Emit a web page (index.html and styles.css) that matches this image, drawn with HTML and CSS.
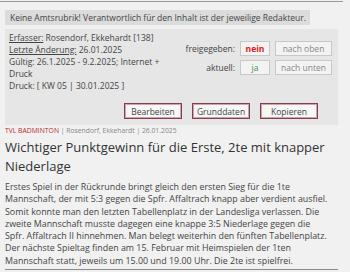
FILE: index.html
```html
<!DOCTYPE html>
<html lang="de">
<head>
    <meta charset="UTF-8">
    <title>Artikel</title>
    <link rel="stylesheet" href="styles.css">
</head>
<body>
    <div class="top-rule"></div>

    <div class="notice">Keine Amtsrubrik! Verantwortlich für den Inhalt ist der jeweilige Redakteur.</div>

    <div class="info-box">
        <div class="info-main">
            <div class="info-left">
                <div><u>Erfasser:</u> Rosendorf, Ekkehardt [138]</div>
                <div><u>Letzte Änderung:</u> 26.01.2025</div>
                <div>Gültig: 26.1.2025 - 9.2.2025; Internet + Druck</div>
                <div>Druck: [ KW 05 | 30.01.2025 ]</div>
            </div>
            <div class="info-right">
                <span class="status-label">freigegeben:</span>
                <span class="status nein">nein</span>
                <span class="move">nach oben</span>
                <span class="status-label">aktuell:</span>
                <span class="status ja">ja</span>
                <span class="move">nach unten</span>
            </div>
        </div>
        <div class="actions">
            <button>Bearbeiten</button>
            <button>Grunddaten</button>
            <button>Kopieren</button>
        </div>
    </div>

    <div class="meta"><span class="rubrik">TVL BADMINTON</span> | Rosendorf, Ekkehardt | 26.01.2025</div>

    <h1>Wichtiger Punktgewinn für die Erste, 2te mit knapper Niederlage</h1>

    <p class="text">Erstes Spiel in der Rückrunde bringt gleich den ersten Sieg für die 1te<br>
        Mannschaft, der mit 5:3 gegen die Spfr. Affaltrach knapp aber verdient ausfiel.<br>
        Somit konnte man den letzten Tabellenplatz in der Landesliga verlassen. Die<br>
        zweite Mannschaft musste dagegen eine knappe 3:5 Niederlage gegen die<br>
        Spfr. Affaltrach II hinnehmen. Man belegt weiterhin den fünften Tabellenplatz.<br>
        Der nächste Spieltag finden am 15. Februar mit Heimspielen der 1ten<br>
        Mannschaft statt, jeweils um 15.00 und 19.00 Uhr. Die 2te ist spielfrei.</p>

    <div class="bottom-rule"></div>
</body>
</html>
```

FILE: styles.css
```css
/* Grundlayout */
* {
    margin: 0;
    padding: 0;
    box-sizing: border-box;
}

body {
    font-family: "Open Sans", Arial, sans-serif;
    background-color: #f1f1f1;
    color: #444;
    padding: 0 12px 0 5px;
    width: 350px;
}

.top-rule {
    height: 1px;
    background-color: #9a9a9a;
    margin: 1px -5px 8px -5px;
}

/* Hinweis oben */
.notice {
    width: fit-content;
    background-color: #dcdcdc;
    font-size: 8.5px;
    line-height: 15px;
    padding: 0 4px 0 5px;
    color: #444;
}

/* Infokasten */
.info-box {
    background-color: #e6e6e6;
    margin-top: 4px;
    padding: 3px 6px 6px 4px;
}

.info-main {
    display: flex;
    justify-content: space-between;
}

.info-left {
    width: 152px;
    font-size: 8.5px;
    line-height: 12px;
}

.info-right {
    display: grid;
    grid-template-columns: auto 30px 57px;
    column-gap: 5px;
    row-gap: 4px;
    align-items: center;
    align-content: start;
    margin-top: 9px;
    font-size: 8.5px;
}

.status-label {
    text-align: right;
}

.status,
.move {
    border: 1px solid #c8c8c8;
    background-color: #f3f3f3;
    text-align: center;
    line-height: 13px;
    color: #888;
}

.status.nein {
    color: #e02020;
    font-weight: bold;
}

.status.ja {
    color: #3a9a3a;
}

.actions {
    display: flex;
    justify-content: flex-end;
    gap: 10px;
    margin-top: 11px;
    padding-right: 14px;
}

button {
    width: 58px;
    height: 16px;
    font-family: "Open Sans", Arial, sans-serif;
    font-size: 8.5px;
    color: #444;
    background-color: #f7f7f7;
    border: 1px solid #8c3b4e;
    box-shadow: inset 0 0 0 1px #c9a6ae;
}

/* Artikel */
.meta {
    font-size: 6.8px;
    color: #888;
    line-height: 12px;
}

.meta .rubrik {
    color: #b8282c;
}

h1 {
    font-size: 13px;
    font-weight: normal;
    color: #333;
    line-height: 19px;
    margin-top: 1px;
}

.text {
    font-size: 8.9px;
    line-height: 12.3px;
    margin-top: 5px;
    margin-right: -12px;
}

.bottom-rule {
    height: 1px;
    background-color: #8a8a8a;
    margin-top: 2px;
}
```
